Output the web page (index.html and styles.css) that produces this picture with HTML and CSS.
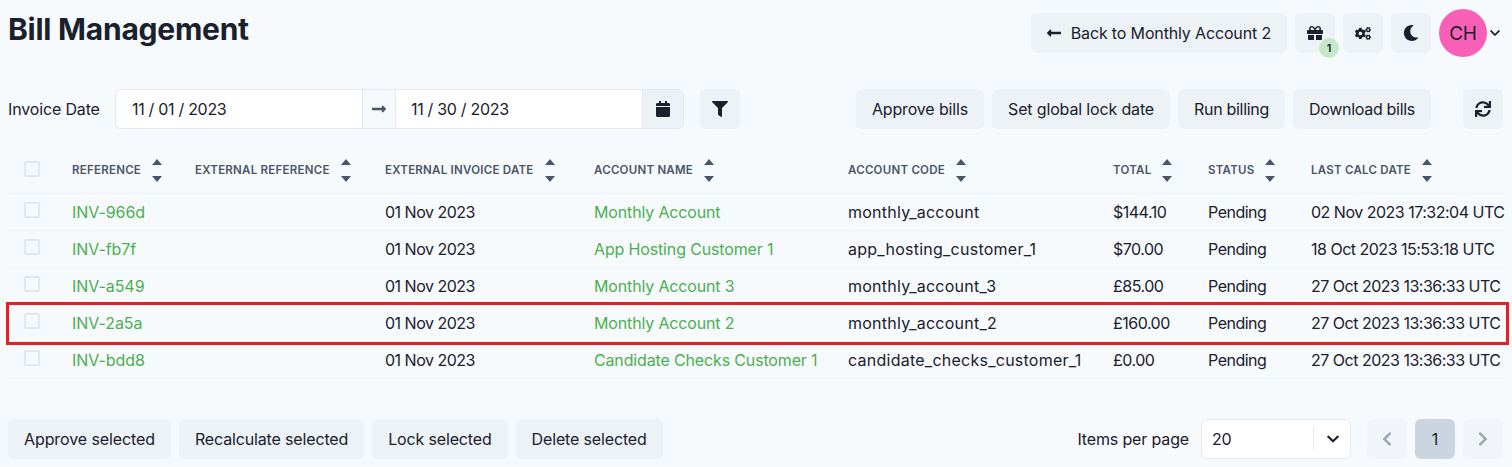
FILE: index.html
```html
<!DOCTYPE html>
<html lang="en">
<head>
<meta charset="utf-8">
<title>Bill Management</title>
<link rel="stylesheet" href="styles.css">
</head>
<body>
<svg class="defs" width="0" height="0" aria-hidden="true">
  <symbol id="sort" viewBox="0 0 10 23"><path d="M5 0l5 6H0zM0 17h10l-5 6z"/></symbol>
</svg>
<div class="page">
  <header class="top">
    <h1>Bill Management</h1>
    <div class="top-actions">
      <button class="btn back"><svg class="arrow" viewBox="0 0 448 512"><path d="M134.059 296H436c6.627 0 12-5.373 12-12v-56c0-6.627-5.373-12-12-12H134.059v-46.059c0-21.382-25.851-32.090-40.971-16.971L7.029 239.029c-9.373 9.373-9.373 24.569 0 33.941l86.059 86.059c15.119 15.119 40.971 4.411 40.971-16.971V296z"/></svg>Back to Monthly Account 2</button>
      <button class="btn icon gift">
        <svg viewBox="0 0 512 512" class="ico16"><path d="M32 448c0 17.700 14.300 32 32 32h160V320H32v128zm256 32h160c17.700 0 32-14.300 32-32V320H288v160zm192-320h-42.100c6.200-12.100 10.100-25.500 10.100-40 0-48.500-39.500-88-88-88-41.600 0-68.500 21.300-103 68.300-34.500-47-61.400-68.300-103-68.300-48.500 0-88 39.500-88 88 0 14.500 3.800 27.900 10.100 40H32c-17.700 0-32 14.300-32 32v80c0 8.800 7.200 16 16 16h480c8.800 0 16-7.200 16-16v-80c0-17.700-14.300-32-32-32zm-326.100 0c-22.100 0-40-17.900-40-40s17.900-40 40-40c19.900 0 34.600 3.300 86.100 80h-86.100zm206.100 0h-86.100c51.400-76.500 65.700-80 86.100-80 22.100 0 40 17.900 40 40s-17.900 40-40 40z"/></svg>
        <span class="badge">1</span>
      </button>
      <button class="btn icon">
        <svg viewBox="0 0 640 512" class="gears"><path d="M512.100 191l-8.200 14.300c-3 5.300-9.400 7.500-15.100 5.400-11.800-4.400-22.600-10.700-32.100-18.600-4.600-3.800-5.800-10.500-2.800-15.700l8.200-14.300c-6.900-8-12.300-17.300-15.900-27.400h-16.500c-6 0-11.200-4.300-12.200-10.300-2-12-2.100-24.600 0-37.100 1-6 6.200-10.400 12.200-10.400h16.500c3.600-10.100 9-19.400 15.900-27.400l-8.200-14.300c-3-5.200-1.900-11.900 2.800-15.700 9.500-7.900 20.400-14.200 32.100-18.600 5.700-2.100 12.100.1 15.100 5.400l8.200 14.300c10.500-1.900 21.200-1.900 31.700 0L552 6.300c3-5.300 9.400-7.500 15.100-5.400 11.800 4.400 22.600 10.700 32.100 18.600 4.600 3.800 5.800 10.500 2.800 15.700l-8.200 14.300c6.900 8 12.300 17.300 15.900 27.400h16.500c6 0 11.200 4.300 12.200 10.300 2 12 2.100 24.600 0 37.100-1 6-6.200 10.400-12.200 10.400h-16.500c-3.600 10.100-9 19.400-15.900 27.400l8.200 14.300c3 5.200 1.900 11.900-2.800 15.700-9.500 7.900-20.400 14.200-32.100 18.600-5.700 2.100-12.100-.1-15.100-5.400l-8.200-14.300c-10.400 1.900-21.200 1.900-31.700 0zm-10.500-58.800c38.500 29.600 82.400-14.300 52.800-52.800-38.500-29.700-82.400 14.300-52.800 52.800zM386.300 286.100l33.700 16.800c10.100 5.800 14.500 18.100 10.500 29.100-8.900 24.200-26.400 46.400-42.600 65.800-7.400 8.900-20.200 11.100-30.300 5.300l-29.100-16.800c-16 13.700-34.600 24.600-54.900 31.700v33.600c0 11.600-8.300 21.600-19.700 23.600-24.600 4.200-50.400 4.400-75.900 0-11.500-2-20-11.900-20-23.600V418c-20.300-7.200-38.900-18-54.900-31.700L74 403c-10 5.800-22.900 3.600-30.300-5.300-16.200-19.400-33.300-41.600-42.200-65.700-4-10.900.4-23.200 10.500-29.100l33.300-16.800c-3.900-20.900-3.900-42.400 0-63.400L12 205.800c-10.100-5.800-14.600-18.100-10.500-29 8.900-24.200 26-46.400 42.200-65.800 7.400-8.900 20.200-11.100 30.300-5.300l29.100 16.800c16-13.700 34.600-24.600 54.900-31.700V57.100c0-11.500 8.200-21.500 19.600-23.500 24.600-4.200 50.500-4.400 76-.1 11.500 2 20 11.900 20 23.600v33.600c20.300 7.200 38.900 18 54.900 31.700l29.100-16.800c10-5.800 22.900-3.600 30.300 5.300 16.200 19.400 33.200 41.600 42.100 65.800 4 10.900.1 23.200-10 29.100l-33.700 16.800c3.900 21 3.900 42.500 0 63.500zm-117.600 21.100c59.200-77-28.700-164.900-105.700-105.700-59.200 77 28.700 164.900 105.700 105.700zm243.400 182.700l-8.200 14.300c-3 5.300-9.400 7.500-15.100 5.400-11.800-4.400-22.600-10.700-32.100-18.600-4.600-3.800-5.800-10.500-2.800-15.700l8.200-14.300c-6.900-8-12.300-17.300-15.900-27.400h-16.500c-6 0-11.200-4.300-12.200-10.300-2-12-2.100-24.600 0-37.100 1-6 6.200-10.400 12.200-10.400h16.500c3.600-10.100 9-19.400 15.900-27.400l-8.200-14.300c-3-5.200-1.900-11.900 2.800-15.700 9.500-7.900 20.400-14.200 32.100-18.600 5.700-2.100 12.100.1 15.100 5.400l8.200 14.300c10.500-1.900 21.200-1.900 31.700 0l8.200-14.300c3-5.300 9.400-7.500 15.100-5.400 11.800 4.400 22.600 10.700 32.100 18.600 4.600 3.800 5.800 10.500 2.800 15.700l-8.200 14.300c6.900 8 12.300 17.300 15.900 27.400h16.500c6 0 11.200 4.300 12.200 10.300 2 12 2.100 24.600 0 37.100-1 6-6.200 10.400-12.200 10.400h-16.500c-3.600 10.100-9 19.400-15.900 27.400l8.200 14.300c3 5.200 1.900 11.900-2.800 15.700-9.500 7.900-20.400 14.200-32.100 18.600-5.700 2.100-12.100-.1-15.100-5.400l-8.200-14.300c-10.400 1.900-21.200 1.900-31.700 0zM501.600 431c38.500 29.600 82.400-14.300 52.800-52.800-38.500-29.600-82.400 14.300-52.800 52.800z"/></svg>
      </button>
      <button class="btn icon">
        <svg viewBox="0 0 512 512" class="ico16"><path d="M283.211 512c78.962 0 151.079-35.925 198.857-94.792 7.068-8.708-.639-21.430-11.562-19.350-124.203 23.654-238.262-71.576-238.262-196.954 0-72.222 38.662-138.635 101.498-174.394 9.686-5.512 7.250-20.197-3.756-22.230A258.156 258.156 0 0 0 283.211 0c-141.309 0-256 114.511-256 256 0 141.309 114.511 256 256 256z"/></svg>
      </button>
      <div class="user">
        <span class="avatar">CH</span>
        <svg viewBox="0 0 448 512" class="caret"><path d="M207.029 381.476L12.505 186.952c-9.373-9.373-9.373-24.569 0-33.941l22.688-22.688c9.357-9.357 24.522-9.375 33.900-.04L224 284.505l154.746-154.021c9.379-9.335 24.544-9.317 33.900.04l22.688 22.688c9.373 9.373 9.373 24.569 0 33.941L240.971 381.476c-9.373 9.372-24.569 9.372-33.942 0z"/></svg>
      </div>
    </div>
  </header>

  <section class="toolbar">
    <label class="date-label">Invoice Date</label>
    <div class="range">
      <span class="date first">11 / 01 / 2023</span>
      <span class="range-sep"><svg viewBox="0 0 448 512" class="arrow sep"><path d="M313.941 216H12c-6.627 0-12 5.373-12 12v56c0 6.627 5.373 12 12 12h301.941v46.059c0 21.382 25.851 32.090 40.971 16.971l86.059-86.059c9.373-9.373 9.373-24.569 0-33.941l-86.059-86.059c-15.119-15.119-40.971-4.411-40.971 16.971V216z"/></svg></span>
      <span class="date second">11 / 30 / 2023</span>
      <span class="cal"><svg viewBox="0 0 448 512" class="calico"><path d="M12 192h424c6.600 0 12 5.400 12 12v260c0 26.500-21.500 48-48 48H48c-26.500 0-48-21.500-48-48V204c0-6.600 5.400-12 12-12zm436-44v-36c0-26.500-21.500-48-48-48h-48V12c0-6.600-5.400-12-12-12h-40c-6.600 0-12 5.400-12 12v52H160V12c0-6.600-5.400-12-12-12h-40c-6.600 0-12 5.400-12 12v52H48C21.500 64 0 85.500 0 112v36c0 6.600 5.400 12 12 12h424c6.600 0 12-5.400 12-12z"/></svg></span>
    </div>
    <button class="btn icon filter"><svg viewBox="0 0 512 512" class="ico16"><path d="M487.976 0H24.028C2.710 0-8.047 25.866 7.058 40.971L192 225.941V432c0 7.831 3.821 15.170 10.237 19.662l80 55.980C298.020 518.690 320 507.493 320 487.980V225.941l184.947-184.970C520.021 25.896 509.338 0 487.976 0z"/></svg></button>
    <div class="bulk">
      <button class="btn">Approve bills</button>
      <button class="btn">Set global lock date</button>
      <button class="btn tight">Run billing</button>
      <button class="btn tight">Download bills</button>
    </div>
    <button class="btn icon"><svg viewBox="0 0 512 512" class="ico16"><path d="M440.650 12.570l4 82.770A247.160 247.160 0 0 0 255.830 8C134.730 8 33.910 94.920 12.290 209.820A12 12 0 0 0 24.090 224h49.050a12 12 0 0 0 11.670-9.260 175.910 175.910 0 0 1 317-56.940l-101.460-4.860a12 12 0 0 0-12.570 12v47.410a12 12 0 0 0 12 12H500a12 12 0 0 0 12-12V12a12 12 0 0 0-12-12h-47.370a12 12 0 0 0-11.980 12.570zM255.830 432a175.610 175.610 0 0 1-146-77.800l101.800 4.870a12 12 0 0 0 12.570-12v-47.400a12 12 0 0 0-12-12H12a12 12 0 0 0-12 12V500a12 12 0 0 0 12 12h47.350a12 12 0 0 0 12-12.600l-4.150-82.570A247.170 247.170 0 0 0 255.830 504c121.110 0 221.930-86.920 243.550-201.820a12 12 0 0 0-11.800-14.180h-49.050a12 12 0 0 0-11.670 9.260A175.860 175.860 0 0 1 255.830 432z"/></svg></button>
  </section>

  <table class="bills">
    <thead>
      <tr>
        <th class="c-check"><span class="check"></span></th>
        <th class="c-ref"><span class="th">Reference <svg class="sort"><use href="#sort"/></svg></span></th>
        <th class="c-ext"><span class="th">External Reference <svg class="sort"><use href="#sort"/></svg></span></th>
        <th class="c-date"><span class="th">External Invoice Date <svg class="sort"><use href="#sort"/></svg></span></th>
        <th class="c-name"><span class="th">Account Name <svg class="sort"><use href="#sort"/></svg></span></th>
        <th class="c-code"><span class="th">Account Code <svg class="sort"><use href="#sort"/></svg></span></th>
        <th class="c-total"><span class="th">Total <svg class="sort"><use href="#sort"/></svg></span></th>
        <th class="c-status"><span class="th">Status <svg class="sort"><use href="#sort"/></svg></span></th>
        <th class="c-calc"><span class="th">Last Calc Date <svg class="sort"><use href="#sort"/></svg></span></th>
      </tr>
    </thead>
    <tbody>
      <tr><td><span class="check"></span></td><td class="ref"><a>INV-966d</a></td><td></td><td class="num">01 Nov 2023</td><td><a>Monthly Account</a></td><td class="code">monthly_account</td><td class="num">$144.10</td><td class="num">Pending</td><td class="num">02 Nov 2023 17:32:04 UTC</td></tr>
      <tr><td><span class="check"></span></td><td class="ref"><a>INV-fb7f</a></td><td></td><td class="num">01 Nov 2023</td><td><a>App Hosting Customer 1</a></td><td class="code">app_hosting_customer_1</td><td class="num">$70.00</td><td class="num">Pending</td><td class="num">18 Oct 2023 15:53:18 UTC</td></tr>
      <tr><td><span class="check"></span></td><td class="ref"><a>INV-a549</a></td><td></td><td class="num">01 Nov 2023</td><td><a>Monthly Account 3</a></td><td class="code">monthly_account_3</td><td class="num">£85.00</td><td class="num">Pending</td><td class="num">27 Oct 2023 13:36:33 UTC</td></tr>
      <tr><td><span class="check"></span></td><td class="ref"><a>INV-2a5a</a></td><td></td><td class="num">01 Nov 2023</td><td><a>Monthly Account 2</a></td><td class="code">monthly_account_2</td><td class="num">£160.00</td><td class="num">Pending</td><td class="num">27 Oct 2023 13:36:33 UTC</td></tr>
      <tr><td><span class="check"></span></td><td class="ref"><a>INV-bdd8</a></td><td></td><td class="num">01 Nov 2023</td><td><a>Candidate Checks Customer 1</a></td><td class="code">candidate_checks_customer_1</td><td class="num">£0.00</td><td class="num">Pending</td><td class="num">27 Oct 2023 13:36:33 UTC</td></tr>
    </tbody>
  </table>

  <footer class="foot">
    <div class="foot-actions">
      <button class="btn loose">Approve selected</button>
      <button class="btn">Recalculate selected</button>
      <button class="btn">Lock selected</button>
      <button class="btn">Delete selected</button>
    </div>
    <div class="paging">
      <span class="per-label">Items per page</span>
      <div class="select"><span class="sel-val">20</span><span class="sel-div"></span><svg viewBox="0 0 448 512" class="sel-caret"><path d="M207.029 381.476L12.505 186.952c-9.373-9.373-9.373-24.569 0-33.941l22.688-22.688c9.357-9.357 24.522-9.375 33.900-.04L224 284.505l154.746-154.021c9.379-9.335 24.544-9.317 33.900.04l22.688 22.688c9.373 9.373 9.373 24.569 0 33.941L240.971 381.476c-9.373 9.372-24.569 9.372-33.942 0z"/></svg></div>
      <div class="pages">
        <button class="btn icon dim"><svg viewBox="0 0 320 512" class="pg"><path d="M34.520 239.030L228.870 44.690c9.370-9.370 24.570-9.370 33.940 0l22.670 22.670c9.360 9.360 9.370 24.520.040 33.900L131.490 256l154.020 154.750c9.340 9.380 9.320 24.540-.040 33.900l-22.670 22.670c-9.370 9.370-24.570 9.370-33.940 0L34.520 272.970c-9.370-9.370-9.370-24.570 0-33.940z"/></svg></button>
        <button class="btn icon current">1</button>
        <button class="btn icon dim"><svg viewBox="0 0 320 512" class="pg"><path d="M285.476 272.971L91.132 467.314c-9.373 9.373-24.569 9.373-33.941 0l-22.667-22.667c-9.357-9.357-9.375-24.522-.040-33.901L188.505 256 34.484 101.255c-9.335-9.379-9.317-24.544.040-33.901l22.667-22.667c9.373-9.373 24.569-9.373 33.941 0L285.475 239.030c9.373 9.372 9.373 24.568.001 33.941z"/></svg></button>
      </div>
    </div>
  </footer>
  <div class="highlight"></div>
</div>
</body>
</html>
```
FILE: styles.css
```css
* { box-sizing: border-box; }
html, body { margin: 0; height: 100%; }
body {
  background: #f7fafd;
  color: #1a202c;
  font-family: "Inter", "Liberation Sans", sans-serif;
  font-size: 16px;
  letter-spacing: -0.15px;
  overflow: hidden;
}
.defs { position: absolute; }
.page { position: relative; height: 467px; padding: 0 8px; }

.btn {
  height: 40px;
  padding: 0 16px;
  border: 0;
  border-radius: 6px;
  background: #edf2f7;
  color: #1a202c;
  font: inherit;
  letter-spacing: inherit;
  display: inline-flex;
  align-items: center;
  justify-content: center;
  white-space: nowrap;
}
.btn.tight { letter-spacing: -0.3px; }
.btn.loose { letter-spacing: -0.1px; }
.btn svg { fill: #1a202c; }
.btn.icon { width: 40px; padding: 0; position: relative; }

.top { display: flex; justify-content: space-between; height: 57px; padding-top: 13px; }
h1 { margin: 0; font-size: 30px; line-height: 32px; font-weight: 700; letter-spacing: -0.25px; }
.top-actions { display: flex; gap: 8px; align-items: center; margin-top: -13px; height: 66px; }
.arrow { width: 14px; height: 16px; margin-right: 10px; }
.ico16 { width: 16px; height: 16px; }
.gears { width: 16px; height: 13px; }
.badge {
  position: absolute; left: 24px; top: 25px;
  width: 20px; height: 20px; border-radius: 50%;
  background: #c6e8c6; color: #1a202c;
  font-size: 11px; font-weight: 600;
  display: flex; align-items: center; justify-content: center;
}
.user { display: flex; align-items: center; gap: 3px; margin-right: 4px; }
.avatar {
  width: 48px; height: 48px; border-radius: 50%;
  background: #f860b8; display: flex; align-items: center; justify-content: center;
  font-size: 19px;
}
.caret { width: 10px; height: 12px; fill: #1a202c; }
.sel-caret { width: 12px; height: 14px; fill: #1a202c; }

.toolbar { display: flex; align-items: center; height: 40px; margin-top: 32px; padding-right: 1px; }
.date-label { width: 107px; }
.range {
  display: flex; height: 40px; width: 569px;
  border: 1px solid #e2e8f0; border-radius: 6px; overflow: hidden; background: #fff;
  align-items: stretch;
}
.date { display: flex; align-items: center; padding-left: 15px; letter-spacing: -0.3px; }
.first { width: 246px; padding-left: 16px; }
.second { flex: 1; }
.range-sep { width: 34px; background: #f7fafd; border: solid #e2e8f0; border-width: 0 1px; display: flex; align-items: center; justify-content: center; }
.arrow.sep { margin: 0; fill: #4a5568; }
.cal { width: 41px; background: #edf2f7; border-left: 1px solid #e2e8f0; display: flex; align-items: center; justify-content: center; }
.calico { width: 14px; height: 16px; fill: #1a202c; }
.filter { margin-left: 16px; }
.bulk { display: flex; gap: 8px; margin-left: auto; margin-right: 32px; }

.bills { width: 1496px; border-collapse: collapse; table-layout: fixed; margin-top: 21px; }
.bills th { height: 43px; padding: 0 0 3px 16px; text-align: left; border-bottom: 1px solid #edf2f7; }
.bills th.c-check { padding-bottom: 1px; }
.bills td { height: 37px; padding: 0 0 0 16px; border-bottom: 1px solid #edf2f7; white-space: nowrap; }
.bills td.num { letter-spacing: -0.5px; }
.bills td.code { letter-spacing: 0.25px; }
.bills td.ref { letter-spacing: -0.05px; }
.th {
  display: inline-flex; align-items: center; gap: 11px;
  font-size: 11.500px; font-weight: 600; letter-spacing: 0.25px; text-transform: uppercase; color: #4a5568; white-space: nowrap;
}
.sort { width: 10px; height: 23px; fill: #4a5568; }
.c-check { width: 48px; }
.c-ref { width: 123px; }
.c-ext { width: 190px; }
.c-date { width: 209px; }
.c-name { width: 254px; }
.c-code { width: 265px; }
.c-total { width: 95px; }
.c-status { width: 103px; }
.c-calc { width: 209px; }
.check { display: block; width: 16px; height: 16px; border: 2px solid #e2e8f0; border-radius: 2px; margin-bottom: 4px; }
a { color: #4caf50; }

.foot { display: flex; justify-content: space-between; margin-top: 40px; padding-right: 1px; }
.foot-actions, .pages { display: flex; gap: 8px; }
.paging { display: flex; align-items: center; }
.per-label { margin-right: 12px; }
.select {
  width: 150px; height: 40px; border: 1px solid #e2e8f0; border-radius: 6px; background: #fff;
  display: flex; align-items: center; padding-left: 10px; margin-right: 16px;
}
.sel-val { width: 101px; letter-spacing: -0.3px; }
.sel-div { width: 1px; height: 22px; background: #e2e8f0; }
.sel-caret { margin-left: 13px; }
.dim { opacity: .5; }
.btn svg.pg { width: 10px; height: 16px; fill: #4a5568; }
.current { background: #cbd5e0; }

.highlight {
  position: absolute; left: 6px; top: 302px; width: 1503px; height: 43px;
  border: 3px solid #ed1c24; pointer-events: none;
}
```
